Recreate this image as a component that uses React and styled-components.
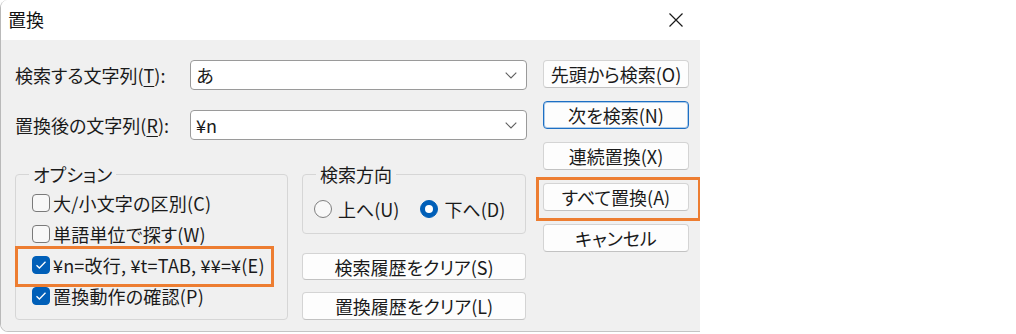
import React from "react";
import styled, { createGlobalStyle } from "styled-components";

const Global = createGlobalStyle`
  html, body { margin: 0; padding: 0; background: #ffffff; }
  body {
    font-family: "Noto Sans CJK JP", "Noto Sans", sans-serif;
    color: #1a1a1a;
  }
  #root { width: 1016px; height: 334px; overflow: hidden; }
`;

const Dialog = styled.div`
  position: relative;
  width: 700px;
  height: 332px;
  box-sizing: border-box;
  display: flex;
  flex-direction: column;
  border-left: 1px solid #b9b9b9;
  border-bottom: 1px solid #c4c4c4;
  border-top-left-radius: 8px;
  border-bottom-left-radius: 8px;
  overflow: hidden;
  font-size: 18px;
  font-feature-settings: "palt";
`;

const TitleBar = styled.div`
  height: 40px;
  flex: none;
  background: #ffffff;
  display: flex;
  align-items: center;
  justify-content: space-between;
  padding: 0 17px 0 7px;
`;

const Title = styled.span`
  font-size: 18px;
  line-height: 22px;
  color: #111;
  margin-top: -2px;
`;

const CloseIcon = () => (
  <svg width="14" height="14" viewBox="0 0 14 14" aria-hidden="true">
    <path d="M0.5 0.5 L13.5 13.5 M13.5 0.5 L0.5 13.5" stroke="#1a1a1a" strokeWidth="1.2" fill="none" />
  </svg>
);

const Body = styled.div`
  flex: 1;
  background: #f0f0f0;
  display: flex;
  gap: 16px;
  padding: 20px 11px 0 14px;
`;

const LeftPane = styled.div`
  width: 512px;
  display: flex;
  flex-direction: column;
`;

const FieldRow = styled.div`
  display: flex;
  align-items: center;
  height: 30px;
  margin-bottom: ${(p) => p.$gap || 0}px;
`;

const FieldLabel = styled.label`
  width: 175px;
  flex: none;
  line-height: 22px;
  white-space: nowrap;
  u { text-decoration-thickness: 1px; text-underline-offset: 3px; }
`;

const Combo = styled.div`
  flex: 1;
  height: 30px;
  box-sizing: border-box;
  background: #ffffff;
  border: 1px solid #9a9a9a;
  border-radius: 4px;
  display: flex;
  align-items: center;
  padding: 0 9px 0 5px;
`;

const ComboValue = styled.span`
  flex: 1;
  line-height: 22px;
  font-feature-settings: normal;
`;

const Chevron = () => (
  <svg width="12" height="7" viewBox="0 0 12 7" aria-hidden="true">
    <path d="M0.7 0.7 L6 6 L11.3 0.7" stroke="#5f5f5f" strokeWidth="1.1" fill="none" />
  </svg>
);

const Lower = styled.div`
  display: flex;
  gap: 14px;
  margin-top: 23px;
`;

const Group = styled.fieldset`
  margin: 0;
  min-width: 0;
  padding: 0;
  border: 1px solid #d6d6d6;
  border-radius: 4px;
  box-sizing: border-box;
  width: ${(p) => p.$width}px;
`;

const Legend = styled.legend`
  margin-left: 13px;
  padding: 0 4px;
  line-height: 22px;
  color: #1a1a1a;
`;

const CheckList = styled.div`
  display: flex;
  flex-direction: column;
  padding: 2px 0 6px 16px;
`;

const CheckRow = styled.label`
  display: flex;
  align-items: center;
  gap: 3px;
  height: 31px;
  line-height: 22px;
  white-space: nowrap;
  letter-spacing: 0.2px;
`;

const Box = styled.span`
  width: 18px;
  height: 18px;
  flex: none;
  box-sizing: border-box;
  border-radius: 4px;
  display: flex;
  align-items: center;
  justify-content: center;
  background: ${(p) => (p.$checked ? "#005fb8" : "#f8f8f8")};
  border: 1px solid ${(p) => (p.$checked ? "#005fb8" : "#7a7a7a")};
`;

const Check = () => (
  <svg width="12" height="10" viewBox="0 0 12 10" aria-hidden="true">
    <path d="M1.5 5.2 L4.4 8 L10.5 1.8" stroke="#ffffff" strokeWidth="1.3" fill="none" />
  </svg>
);

const SideCol = styled.div`
  width: 224px;
  display: flex;
  flex-direction: column;
`;

const RadioRow = styled.div`
  height: 48px;
  display: flex;
  align-items: center;
  gap: 21px;
  padding-left: 11px;
`;

const RadioItem = styled.label`
  display: flex;
  align-items: center;
  gap: 6px;
  line-height: 22px;
  white-space: nowrap;
`;

const RadioDot = styled.span`
  width: 18px;
  height: 18px;
  flex: none;
  box-sizing: border-box;
  border-radius: 50%;
  display: flex;
  align-items: center;
  justify-content: center;
  background: ${(p) => (p.$checked ? "#005fb8" : "#f8f8f8")};
  border: 1px solid ${(p) => (p.$checked ? "#005fb8" : "#7f7f7f")};
  &::after {
    content: "";
    display: ${(p) => (p.$checked ? "block" : "none")};
    width: 8px;
    height: 8px;
    border-radius: 50%;
    background: #ffffff;
  }
`;

const Button = styled.button`
  font: inherit;
  font-size: 18px;
  font-feature-settings: "palt";
  color: #1a1a1a;
  height: ${(p) => p.$h || 28}px;
  margin-top: ${(p) => p.$mt || 0}px;
  padding: 0;
  line-height: 22px;
  box-sizing: border-box;
  background: #fdfdfd;
  border: 1px solid ${(p) => (p.$default ? "#1d6fc4" : "#d4d4d4")};
  border-bottom-color: ${(p) => (p.$default ? "#1d6fc4" : "#c2c2c2")};
  box-shadow: ${(p) => (p.$default ? "inset 0 0 0 1px rgba(29,111,196,0.35)" : "none")};
  border-radius: 4px;
  display: flex;
  align-items: center;
  justify-content: center;
  white-space: nowrap;
`;

const RightPane = styled.div`
  width: 146px;
  display: flex;
  flex-direction: column;
  gap: 13px;
`;

const Annotation = styled.div`
  position: absolute;
  left: ${(p) => p.$x}px;
  top: ${(p) => p.$y}px;
  width: ${(p) => p.$w}px;
  height: ${(p) => p.$h}px;
  box-sizing: border-box;
  border: 3px solid #ed7d31;
  pointer-events: none;
`;

const options = [
  { text: "大/小文字の区別(C)", checked: false },
  { text: "単語単位で探す(W)", checked: false },
  { text: "¥n=改行, ¥t=TAB, ¥¥=¥(E)", checked: true },
  { text: "置換動作の確認(P)", checked: true },
];

export default function App() {
  return (
    <>
      <Global />
      <Dialog>
        <TitleBar>
          <Title>置換</Title>
          <CloseIcon />
        </TitleBar>
        <Body>
          <LeftPane>
            <FieldRow $gap={20}>
              <FieldLabel>検索する文字列(<u>T</u>):</FieldLabel>
              <Combo>
                <ComboValue>あ</ComboValue>
                <Chevron />
              </Combo>
            </FieldRow>
            <FieldRow>
              <FieldLabel>置換後の文字列(<u>R</u>):</FieldLabel>
              <Combo>
                <ComboValue>¥n</ComboValue>
                <Chevron />
              </Combo>
            </FieldRow>
            <Lower>
              <Group $width={273}>
                <Legend>オプション</Legend>
                <CheckList>
                  {options.map((o) => (
                    <CheckRow key={o.text}>
                      <Box $checked={o.checked}>{o.checked && <Check />}</Box>
                      <span>{o.text}</span>
                    </CheckRow>
                  ))}
                </CheckList>
              </Group>
              <SideCol>
                <Group $width={224}>
                  <Legend>検索方向</Legend>
                  <RadioRow>
                    <RadioItem>
                      <RadioDot />
                      <span>上へ(U)</span>
                    </RadioItem>
                    <RadioItem>
                      <RadioDot $checked />
                      <span>下へ(D)</span>
                    </RadioItem>
                  </RadioRow>
                </Group>
                <Button $mt={19} $h={27}>検索履歴をクリア(S)</Button>
                <Button $mt={12} $h={28}>置換履歴をクリア(L)</Button>
              </SideCol>
            </Lower>
          </LeftPane>
          <RightPane>
            <Button>先頭から検索(O)</Button>
            <Button $default>次を検索(N)</Button>
            <Button>連続置換(X)</Button>
            <Button>すべて置換(A)</Button>
            <Button>キャンセル</Button>
          </RightPane>
        </Body>
        <Annotation $x={14} $y={246} $w={259} $h={41} />
        <Annotation $x={535} $y={177} $w={165} $h={44} />
      </Dialog>
    </>
  );
}
